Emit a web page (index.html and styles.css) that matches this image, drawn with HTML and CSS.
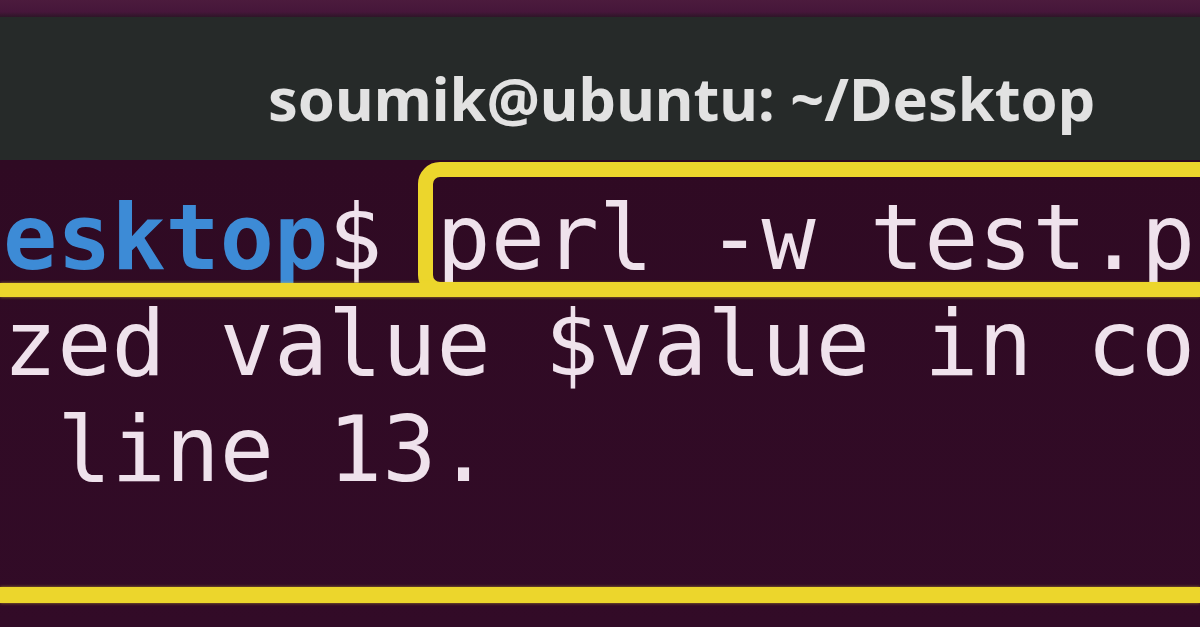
FILE: index.html
```html
<!DOCTYPE html>
<html lang="en">
<head>
<meta charset="utf-8">
<title>soumik@ubuntu: ~/Desktop</title>
<link rel="stylesheet" href="styles.css">
</head>
<body>
<div class="desktop-band"></div>
<header class="titlebar">
  <span class="title">soumik@ubuntu: ~/Desktop</span>
</header>
<main class="terminal">
  <div class="line"><span class="path">soumik@ubuntu:~/Desktop</span>$ perl -w test.pl</div>
  <div class="line">Use of uninitialized value $value in concatenation (.) or</div>
  <div class="line">string at test.pl line 13.</div>
  <div class="mark mark-cmd"></div>
  <div class="mark mark-line1"></div>
  <div class="mark mark-line2"></div>
</main>
</body>
</html>
```

FILE: styles.css
```css
* { box-sizing: border-box; }

html, body {
  margin: 0;
  padding: 0;
  width: 1200px;
  height: 627px;
  overflow: hidden;
  background: #300a24;
}

body {
  display: flex;
  flex-direction: column;
}

.desktop-band {
  height: 17px;
  flex: none;
  background: linear-gradient(#4c1b3d, #46163a 70%, #2e1528);
}

.titlebar {
  height: 143px;
  flex: none;
  background: #262a29;
  display: flex;
  align-items: center;
  padding-left: 268px;
  padding-top: 18px;
}

.title {
  font-family: "Noto Sans", "DejaVu Sans", sans-serif;
  font-weight: 700;
  font-size: 59.5px;
  color: #e2e2e2;
  white-space: pre;
}

.terminal {
  position: relative;
  flex: 1;
  background: linear-gradient(#2f0a23, #320b27);
  padding-top: 25px;
  overflow: hidden;
}

.line {
  font-family: "DejaVu Sans Mono", "Liberation Mono", monospace;
  font-size: 90px;
  line-height: 106px;
  height: 106px;
  color: #efe2ec;
  white-space: pre;
  margin-left: calc(3px - 17ch);
}

.path {
  color: #3d8bd6;
  font-weight: 700;
}

.mark {
  position: absolute;
  background: #ecd62c;
  box-shadow: 0 0 3px rgba(236, 214, 44, 0.6);
}

.mark-line1 {
  left: 0;
  right: 0;
  top: 123px;
  height: 14px;
}

.mark-line2 {
  left: 0;
  right: 0;
  top: 427px;
  height: 16px;
}

.mark-cmd {
  left: 418px;
  right: -40px;
  top: 2px;
  height: 135px;
  background: transparent;
  border: 15px solid #ecd62c;
  border-radius: 22px;
  box-shadow: none;
}
```
